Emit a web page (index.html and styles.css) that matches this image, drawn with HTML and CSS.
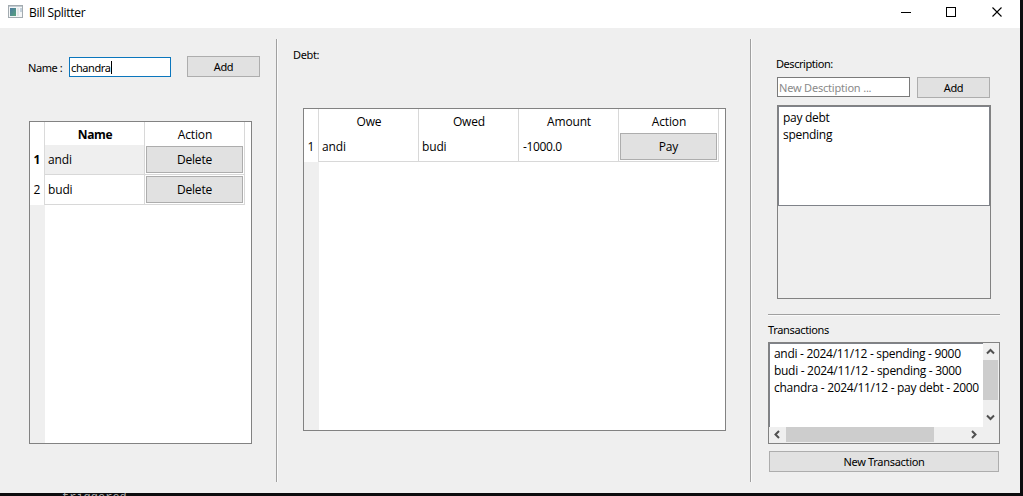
FILE: index.html
```html
<!DOCTYPE html>
<html lang="en">
<head>
<meta charset="utf-8">
<title>Bill Splitter</title>
<link rel="stylesheet" href="styles.css">
</head>
<body>
<div class="window">
  <header class="titlebar">
    <svg class="app-icon" width="16" height="14" viewBox="0 0 16 14">
      <defs><linearGradient id="pane" x1="0" y1="0" x2="1" y2="1"><stop offset="0" stop-color="#4a78a0"/><stop offset="1" stop-color="#58a37c"/></linearGradient></defs>
      <rect x=".5" y=".5" width="14" height="12" fill="#f4f6f7" stroke="#a3abb0"/>
      <path d="M1 1.5h13" stroke="#c3ccd2"/>
      <rect x="2" y="3" width="6" height="8" fill="url(#pane)"/>
      <rect x="9" y="3" width="2" height="8" fill="#e3e6e8"/>
      <rect x="12" y="3" width="2" height="4" fill="#c3d0da"/>
    </svg>
    <span class="title">Bill Splitter</span>
    <svg class="controls" width="108" height="28" viewBox="0 0 108 28" fill="none" stroke="#000">
      <path d="M5 12.5h10"/>
      <rect x="50.500" y="7.500" width="9" height="9"/>
      <path d="M96.500 7.500l9 9M105.500 7.500l-9 9" stroke-width="1.100"/>
    </svg>
  </header>
  <main class="content">
    <section class="people">
      <div class="name-form">
        <label class="label name-label">Name :</label>
        <div class="field focused"><span class="label typed">chandra</span><i class="caret"></i></div>
        <button class="btn small">Add</button>
      </div>
      <div class="table people-table">
        <div class="row head"><span class="num"></span><span class="cell bold">Name</span><span class="cell">Action</span></div>
        <div class="row"><span class="num bold">1</span><span class="cell selected">andi</span><span class="cell"><button class="btn">Delete</button></span></div>
        <div class="row"><span class="num">2</span><span class="cell">budi</span><span class="cell"><button class="btn">Delete</button></span></div>
        <div class="gutter"></div>
      </div>
    </section>
    <div class="vline"></div>
    <section class="debts">
      <div class="label debt-label">Debt:</div>
      <div class="table debt-table">
        <div class="row head"><span class="num"></span><span class="cell">Owe</span><span class="cell">Owed</span><span class="cell">Amount</span><span class="cell">Action</span></div>
        <div class="row"><span class="num">1</span><span class="cell">andi</span><span class="cell">budi</span><span class="cell amount">-1000.0</span><span class="cell"><button class="btn">Pay</button></span></div>
        <div class="gutter"></div>
      </div>
    </section>
    <div class="vline"></div>
    <section class="side">
      <div class="label desc-label">Description:</div>
      <div class="desc-form">
        <div class="field desc-field"><span class="label placeholder">New Desctiption ...</span></div>
        <button class="btn small">Add</button>
      </div>
      <div class="desc-area"><div class="desc-list"><div>pay debt</div><div>spending</div></div></div>
      <div class="hline"></div>
      <div class="label trans-label">Transactions</div>
      <div class="trans">
        <div class="trans-list"><div>andi - 2024/11/12 - spending - 9000</div><div>budi - 2024/11/12 - spending - 3000</div><div>chandra - 2024/11/12 - pay debt - 2000</div></div>
        <div class="vscroll">
          <svg width="15" height="17" viewBox="0 0 15 17"><path d="M4 10.500l3.500-3.500 3.500 3.500"/></svg>
          <i class="thumb"></i>
          <svg width="15" height="17" viewBox="0 0 15 17"><path d="M4 6.500l3.500 3.500 3.500-3.500"/></svg>
        </div>
        <div class="hscroll">
          <svg width="17" height="15" viewBox="0 0 17 15"><path d="M10 4l-3.500 3.500 3.500 3.500"/></svg>
          <i class="thumb"></i>
          <svg width="17" height="15" viewBox="0 0 17 15"><path d="M7 4l3.500 3.500-3.500 3.500"/></svg>
        </div>
      </div>
      <button class="btn new-btn">New Transaction</button>
    </section>
  </main>
</div>
<div class="terminal">triggered</div>
</body>
</html>
```
FILE: styles.css
```css
* { box-sizing: border-box; }
body { margin: 0; width: 1023px; height: 496px; overflow: hidden; background: #0c0c0e; color: #000; font: 12px/16px "Open Sans", "Noto Sans", sans-serif; }
.window { width: 1020px; height: 493px; background: #efefef; display: flex; flex-direction: column; }
.titlebar { height: 28px; flex: none; background: #fff; display: flex; padding-left: 8px; }
.app-icon { margin-top: 5px; }
.title { margin: 5px 0 0 5px; letter-spacing: -.3px; }
.controls { margin: 0 16px 0 auto; }
.content { flex: 1; display: flex; }
.label { font: 11px/14px "Noto Sans", sans-serif; letter-spacing: -.35px; white-space: nowrap; }
.btn { border: 1px solid #adadad; background: #e1e1e1; color: #000; padding: 0; font: 12px/16px "Open Sans", sans-serif; display: block; }
.btn.small { width: 73px; height: 21px; font: 11px/14px "Noto Sans", sans-serif; letter-spacing: -.3px; flex: none; }
.field { background: #fff; border: 1px solid #7a7a7a; height: 20px; display: flex; align-items: center; padding: 1px 0 0 1px; }
.focused { border-color: #0b76bd; width: 102px; }
.typed { letter-spacing: -.4px; }
.caret { width: 1px; height: 13px; background: #000; }
.placeholder { color: #8a8a8a; letter-spacing: -.2px; }
.vline { width: 2px; height: 443px; margin-top: 11px; border-left: 1px solid #a0a0a0; border-right: 1px solid #fafafa; flex: none; }
.people { width: 276px; padding: 28px 0 0 28px; flex: none; }
.name-form { display: flex; height: 21px; align-items: flex-end; }
.name-label { width: 41px; height: 16px; letter-spacing: -.45px; }
.name-form .btn { margin-left: 16px; }
.table { background: #fff; border: 1px solid #828282; display: flex; flex-direction: column; }
.people-table { width: 223px; height: 323px; margin: 44px 0 0 1px; }
.row { display: flex; height: 30px; flex: none; }
.num { width: 15px; border-right: 1px solid #dadada; display: flex; align-items: center; justify-content: center; }
.cell { width: 100px; border-right: 1px solid #d8d8d8; border-bottom: 1px solid #d8d8d8; padding: 1px 0 0 3px; display: flex; align-items: center; letter-spacing: -.15px; }
.head { height: 23px; }
.head .cell { border-bottom: 0; justify-content: center; padding: 2px 0 0 1px; }
.cell .btn { width: 97px; height: 27px; margin: -1px 0 0 -2px; letter-spacing: -.2px; }
.bold { font-weight: 700; }
.head .bold { letter-spacing: -.4px; }
.selected { background: #efefef; }
.cell.amount { letter-spacing: -.35px; padding-left: 4px; }
.gutter { width: 15px; flex: 1; background: #efefef; }
.debts { width: 472px; padding: 20px 0 0 15px; flex: none; }
.debt-label { height: 14px; }
.debt-table { width: 423px; height: 323px; margin: 46px 0 0 10px; }
.side { width: 268px; padding: 29px 0 0 16px; flex: none; }
.desc-label { margin-left: 8px; letter-spacing: -.45px; }
.desc-form { display: flex; gap: 7px; margin: 6px 0 0 9px; }
.desc-field { width: 133px; }
.desc-area { width: 214px; height: 194px; margin: 7px 0 0 9px; border: 1px solid #828282; }
.desc-list { height: 100px; background: #fff; border: 1px solid #7f8289; padding: 2px 4px; line-height: 17px; letter-spacing: -.28px; }
.hline { height: 2px; width: 232px; margin-top: 15px; border-top: 1px solid #a0a0a0; border-bottom: 1px solid #fafafa; }
.trans-label { margin-top: 7px; height: 14px; }
.trans { width: 232px; height: 102px; margin-top: 5px; border: 1px solid #828282; display: grid; grid-template: 84px 16px / 214px 16px; }
.trans-list { background: #fff; border: solid #7f8289; border-width: 1px 0 0 1px; padding: 1px 0 0 4px; line-height: 17px; letter-spacing: -.3px; white-space: nowrap; }
.vscroll { display: flex; flex-direction: column; }
.vscroll .thumb { width: 15px; height: 40px; background: #cdcdcd; margin-bottom: 9px; }
.hscroll { display: flex; }
.hscroll .thumb { width: 148px; height: 15px; background: #cdcdcd; margin-right: 31px; }
.trans svg { fill: none; stroke: #505050; stroke-width: 2; flex: none; }
.new-btn { width: 230px; height: 21px; margin: 7px 0 0 1px; font: 11px/14px "Noto Sans", sans-serif; letter-spacing: -.3px; padding-top: 1px; }
.terminal { height: 3px; overflow: hidden; margin-left: 62px; color: #aaa; font: 12px/10px "Liberation Mono", monospace; }
```
